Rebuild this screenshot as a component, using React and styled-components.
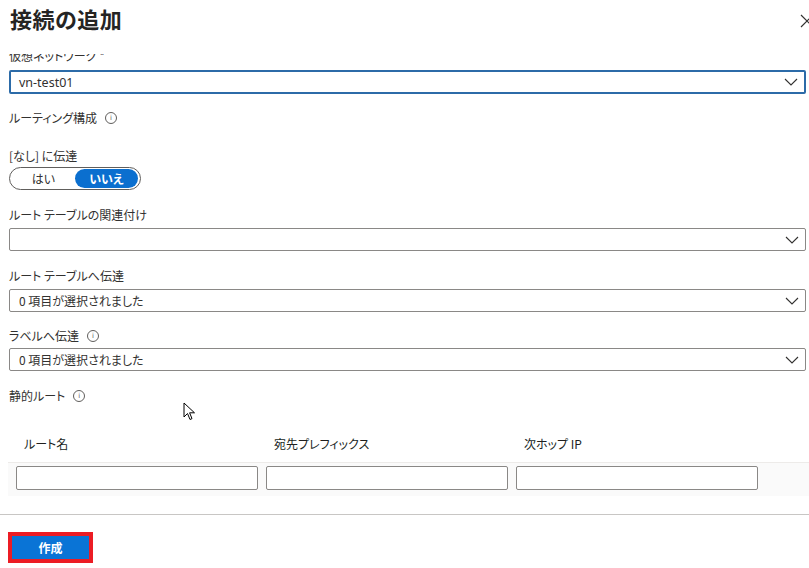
import React from 'react';
import styled, { createGlobalStyle } from 'styled-components';

const GlobalStyle = createGlobalStyle`
  body {
    margin: 0;
    background: #ffffff;
    font-family: "Noto Sans CJK JP", "Noto Sans", sans-serif;
    font-feature-settings: "palt";
    color: #323130;
  }
`;

const Panel = styled.div`
  position: relative;
  width: 809px;
  height: 568px;
  overflow: hidden;
  display: flex;
  flex-direction: column;
  background: #fff;
`;

const Header = styled.div`
  height: 54px;
  flex: none;
  display: flex;
  justify-content: space-between;
  align-items: flex-start;
  padding: 3px 0 0 10px;
  box-sizing: border-box;
`;

const Title = styled.h1`
  margin: 0;
  font-size: 22px;
  font-weight: 600;
  line-height: 30px;
  color: #252423;
  letter-spacing: 0.5px;
`;

const CloseButton = styled.button`
  border: 0;
  background: none;
  padding: 0;
  margin: 10px -6px 0 0;
  width: 16px;
  height: 16px;
  cursor: pointer;
`;

const Body = styled.div`
  height: 460px;
  flex: none;
  overflow: hidden;
`;

const Content = styled.div`
  margin-top: -6px;
  padding: 0 3px 0 9px;
`;

const Label = styled.div`
  display: flex;
  align-items: center;
  gap: 8px;
  font-size: 12px;
  line-height: 16px;
  color: #323130;
  margin-top: ${(p) => p.$top || 0}px;
`;

const InfoIcon = styled.span`
  display: inline-flex;
  align-items: center;
  justify-content: center;
  width: 10px;
  height: 10px;
  border: 1px solid #605e5c;
  border-radius: 50%;
  font-size: 7px;
  line-height: 1;
  color: #605e5c;
  font-family: "DejaVu Sans", sans-serif;
`;

const Dropdown = styled.div`
  display: flex;
  align-items: center;
  justify-content: space-between;
  box-sizing: border-box;
  height: ${(p) => (p.$focused ? 24 : 23)}px;
  margin-top: ${(p) => p.$top || 0}px;
  padding: 0 6px 0 ${(p) => (p.$focused ? 8 : 9)}px;
  border: ${(p) => (p.$focused ? '2px solid #2c6ba8' : '1px solid #8a8886')};
  border-radius: 2px;
  background: #fff;
  font-size: 12px;
  color: #323130;
`;

const DropdownText = styled.span`
  font-family: ${(p) => (p.$latin ? '"Segoe UI", "Noto Sans", sans-serif' : 'inherit')};
  font-size: ${(p) => (p.$latin ? 12.5 : 12)}px;
`;

const Toggle = styled.div`
  display: flex;
  align-items: center;
  box-sizing: border-box;
  width: 132px;
  height: 23px;
  margin-top: 3px;
  padding: 1px 2px 1px 2px;
  border: 1px solid #605e5c;
  border-radius: 12px;
`;

const ToggleOption = styled.div`
  flex: 1;
  height: 19px;
  display: flex;
  align-items: center;
  justify-content: center;
  border-radius: 10px;
  font-size: 12px;
  font-weight: ${(p) => (p.$active ? 600 : 400)};
  color: ${(p) => (p.$active ? '#fff' : '#323130')};
  background: ${(p) => (p.$active ? '#0b6fcf' : 'transparent')};
`;

const Table = styled.div`
  margin: 21px -3px 0 -1px;
`;

const HeadRow = styled.div`
  display: grid;
  grid-template-columns: 250px 250px 250px 1fr;
  height: 37px;
  align-items: center;
  padding-left: 16px;
  border-bottom: 1px solid #edebe9;
`;

const HeadCell = styled.div`
  font-size: 12px;
  font-weight: 400;
  color: #201f1e;
`;

const DataRow = styled.div`
  display: grid;
  grid-template-columns: 242px 242px 242px;
  column-gap: 8px;
  padding: 3px 0 6px 8px;
  background: #fafafa;
`;

const TextInput = styled.input`
  box-sizing: border-box;
  height: 24px;
  border: 1px solid #8a8886;
  border-radius: 2px;
  background: #fff;
  margin: 0;
`;

const Footer = styled.div`
  flex: 1;
  border-top: 1px solid #c8c6c4;
  padding: 19px 0 0 12px;
`;

const PrimaryButton = styled.button`
  width: 77px;
  height: 23px;
  border: 0;
  border-radius: 0;
  background: #0a74d6;
  color: #fff;
  font-family: inherit;
  font-size: 12px;
  font-weight: 700;
  line-height: 23px;
  padding: 0;
  outline: 4px solid #ec1c24;
  outline-offset: 0px;
`;

const Cursor = styled.svg`
  position: absolute;
  left: 183px;
  top: 402px;
`;

const Chevron = () => (
  <svg width="14" height="8" viewBox="0 0 14 8">
    <path d="M1 1 L7 7 L13 1" fill="none" stroke="#323130" strokeWidth="1.1" />
  </svg>
);

const Select = ({ focused, top, children, latin }) => (
  <Dropdown $focused={focused} $top={top}>
    <DropdownText $latin={latin}>{children}</DropdownText>
    <Chevron />
  </Dropdown>
);

export default function App() {
  return (
    <Panel>
      <GlobalStyle />
      <Header>
        <Title>接続の追加</Title>
        <CloseButton aria-label="閉じる">
          <svg width="16" height="16" viewBox="0 0 16 16">
            <path d="M2 2 L14 14 M14 2 L2 14" stroke="#323130" strokeWidth="1.2" />
          </svg>
        </CloseButton>
      </Header>
      <Body>
        <Content>
          <Label>仮想ネットワーク *</Label>
          <Select focused top={6} latin>
            vn-test01
          </Select>

          <Label $top={16}>
            ルーティング構成 <InfoIcon>i</InfoIcon>
          </Label>

          <Label $top={22}>[なし] に伝達</Label>
          <Toggle>
            <ToggleOption>はい</ToggleOption>
            <ToggleOption $active>いいえ</ToggleOption>
          </Toggle>

          <Label $top={17}>ルート テーブルの関連付け</Label>
          <Select top={5} />

          <Label $top={17}>ルート テーブルへ伝達</Label>
          <Select top={5}>0 項目が選択されました</Select>

          <Label $top={16}>
            ラベルへ伝達 <InfoIcon>i</InfoIcon>
          </Label>
          <Select top={4}>0 項目が選択されました</Select>

          <Label $top={17}>
            静的ルート <InfoIcon>i</InfoIcon>
          </Label>

          <Table>
            <HeadRow>
              <HeadCell>ルート名</HeadCell>
              <HeadCell>宛先プレフィックス</HeadCell>
              <HeadCell>次ホップ IP</HeadCell>
            </HeadRow>
            <DataRow>
              <TextInput />
              <TextInput />
              <TextInput />
            </DataRow>
          </Table>
        </Content>
      </Body>
      <Footer>
        <PrimaryButton>作成</PrimaryButton>
      </Footer>
      <Cursor width="13" height="20" viewBox="0 0 13 20">
        <path d="M1 1 L1 15 L4.5 11.5 L7 17.5 L9 16.6 L6.6 10.8 L11.5 10.8 Z" fill="#fff" stroke="#000" strokeWidth="1" strokeLinejoin="round" />
      </Cursor>
    </Panel>
  );
}
